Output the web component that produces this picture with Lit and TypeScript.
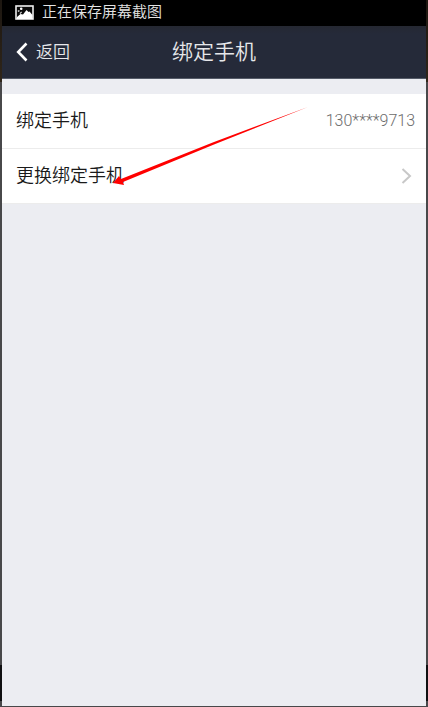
import { LitElement, html, css } from "lit";
import { customElement, property } from "lit/decorators.js";

@customElement("status-bar")
class StatusBar extends LitElement {
  @property() message = "";

  static styles = css`
    :host {
      display: flex;
      align-items: center;
      gap: 8px;
      height: 26px;
      padding: 0 13px 2px;
      box-sizing: border-box;
      background: #000;
      color: #e4e4e4;
      font-size: 15px;
      font-weight: 350;
      line-height: 24px;
    }
    .icon {
      display: block;
      flex: none;
    }
  `;

  render() {
    return html`
      <svg class="icon" width="19" height="15" viewBox="0 0 19 15" aria-hidden="true">
        <rect x="1" y="1" width="17" height="13" fill="#0a0a0a" stroke="#eee" stroke-width="1.6" />
        <path d="M2 14V12L5.5 9L8 9.5L11.5 5L13.5 7L14.5 6.5L17.5 10V14Z" fill="#fff" />
        <circle cx="6.2" cy="3.8" r="1.3" fill="#fff" />
        <path d="M2.8 6.4L4.4 5.6M5 8.6L6.6 6.8" stroke="#ddd" stroke-width="1.2" />
      </svg>
      <span>${this.message}</span>
    `;
  }
}

@customElement("nav-header")
class NavHeader extends LitElement {
  @property() heading = "";

  static styles = css`
    :host {
      display: grid;
      grid-template-columns: 1fr auto 1fr;
      align-items: center;
      height: 53px;
      box-sizing: border-box;
      padding: 0 12px;
      border-bottom: 1px solid #555b68;
      background: linear-gradient(#252832, #252a39 8px);
      color: #e6e7ea;
      font-weight: 350;
    }
    .back {
      display: flex;
      align-items: center;
      justify-self: start;
      gap: 8px;
      padding: 0;
      border: 0;
      background: none;
      color: inherit;
      font: inherit;
      font-size: 17px;
      line-height: 24px;
    }
    .chevron {
      display: block;
    }
    .heading {
      margin: 0;
      font-size: 21px;
      font-weight: inherit;
      line-height: 30px;
    }
  `;

  render() {
    return html`
      <button class="back" type="button">
        <svg class="chevron" width="14" height="20" viewBox="0 0 14 20" aria-hidden="true">
          <path d="M12.5 1.5L4.2 10L12.5 18.5" fill="none" stroke="#fff" stroke-width="2.6" />
        </svg>
        <span>返回</span>
      </button>
      <h1 class="heading">${this.heading}</h1>
    `;
  }
}

@customElement("app-root")
class AppRoot extends LitElement {
  static styles = css`
    :host {
      display: flex;
      flex-direction: column;
      min-height: 100vh;
      box-sizing: border-box;
      border: solid #48484a;
      border-width: 0 2px 1px;
      border-image: linear-gradient(#1c1610, #30261a 84px, #48484a 84px, #48484a 94%, #101012 94%, #101012 99%, #48484a 99%) 2;
      background: #ecedf2;
      font-family: Roboto, "Noto Sans CJK SC", sans-serif;
    }
    .list {
      position: relative;
      margin-top: 15px;
      background: #fff;
      color: #1a1a1a;
      font-size: 18px;
      font-weight: 350;
      line-height: 26px;
    }
    .row {
      display: flex;
      align-items: center;
      justify-content: space-between;
      width: 100%;
      height: 55px;
      box-sizing: border-box;
      padding: 0 11px 0 14px;
      border: 0;
      border-bottom: 1px solid #ececec;
      background: none;
      color: inherit;
      font: inherit;
      text-align: left;
    }
    .number {
      color: #6c6c6c;
      font-size: 16px;
      font-weight: 300;
    }
    .more {
      display: block;
      margin-right: 3px;
    }
    .pointer {
      position: absolute;
      top: 12px;
      left: 110px;
      pointer-events: none;
    }
  `;

  render() {
    return html`
      <status-bar message="正在保存屏幕截图"></status-bar>
      <nav-header heading="绑定手机"></nav-header>
      <main class="list">
        <div class="row">
          <span>绑定手机</span>
          <span class="number">130****9713</span>
        </div>
        <button class="row" type="button">
          <span>更换绑定手机</span>
          <svg class="more" width="12" height="18" viewBox="0 0 12 18" aria-hidden="true">
            <path d="M2.5 2L10 9L2.5 16" fill="none" stroke="#c8c8c8" stroke-width="2" />
          </svg>
        </button>
        <svg class="pointer" width="198" height="82" viewBox="0 0 198 82" aria-hidden="true">
          <path d="M1 77L7 70L9 73L102 36L196 1L102 38.4L11 76L12 79Z" fill="#f00" />
        </svg>
      </main>
    `;
  }
}
